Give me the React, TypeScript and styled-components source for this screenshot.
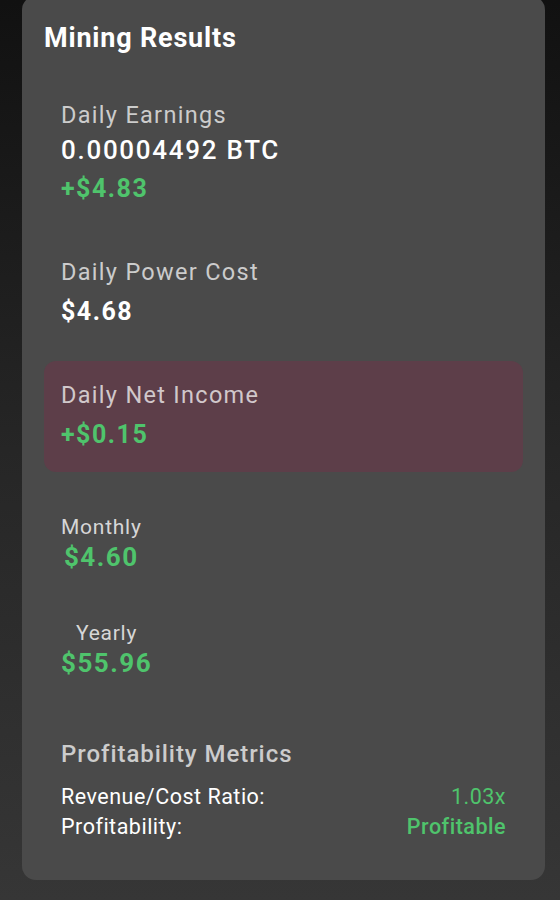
import React from 'react';
import styled, { createGlobalStyle } from 'styled-components';

const GlobalStyle = createGlobalStyle`
  html, body {
    margin: 0;
    padding: 0;
  }
  body {
    min-height: 900px;
    background: linear-gradient(180deg, #111111 0%, #262626 50%, #363636 100%);
    font-family: Roboto, "Noto Sans", "Liberation Sans", sans-serif;
    color: #ffffff;
    overflow: hidden;
  }
`;

const green = '#4fc46c';

const Page = styled.div`
  width: 560px;
  height: 900px;
  overflow: hidden;
`;

const Card = styled.section`
  display: flex;
  flex-direction: column;
  margin: -4px 15px 0 22px;
  padding: 25px 22px 20px;
  background: #4a4a4a;
  border-radius: 14px;
`;

const Title = styled.h2`
  margin: 0;
  font-size: 27px;
  line-height: 34px;
  font-weight: 700;
  letter-spacing: 0.8px;
  color: #ffffff;
`;

const ResultList = styled.div`
  display: flex;
  flex-direction: column;
  gap: 12px;
  margin-top: 26px;
`;

const ResultItem = styled.div<{ $highlight?: boolean }>`
  display: flex;
  flex-direction: column;
  padding: 18px 17px 19px;
  border-radius: 12px;
  background: ${({ $highlight }) => ($highlight ? '#5d3e49' : 'transparent')};
`;

const Label = styled.div`
  font-size: 23.5px;
  line-height: 33px;
  letter-spacing: 1.3px;
  white-space: nowrap;
  color: rgba(255, 255, 255, 0.72);
`;

const Value = styled.div<{ $positive?: boolean; $bold?: boolean; $gap?: number }>`
  margin-top: ${({ $gap }) => $gap ?? 0}px;
  font-size: ${({ $bold }) => ($bold ? 25 : 26)}px;
  line-height: 36px;
  font-weight: ${({ $bold }) => ($bold ? 700 : 500)};
  letter-spacing: ${({ $bold }) => ($bold ? 1.5 : 1.7)}px;
  white-space: nowrap;
  color: ${({ $positive }) => ($positive ? green : '#ffffff')};
`;

const StatGrid = styled.div`
  display: grid;
  justify-items: start;
  gap: 14px;
  margin-top: 24px;
`;

const StatItem = styled.div`
  display: flex;
  flex-direction: column;
  align-items: center;
  padding: 16px 17px;
`;

const StatLabel = styled.div`
  font-size: 21px;
  line-height: 30px;
  letter-spacing: 0.75px;
  color: rgba(255, 255, 255, 0.78);
`;

const StatValue = styled.div`
  margin-top: 1px;
  font-size: 26px;
  line-height: 29px;
  font-weight: 700;
  letter-spacing: 1.5px;
  color: ${green};
`;

const Metrics = styled.div`
  display: flex;
  flex-direction: column;
  margin-top: 24px;
  padding: 18px 17px;
`;

const MetricsTitle = styled.h3`
  margin: 0 0 10px;
  font-size: 24px;
  line-height: 36px;
  font-weight: 500;
  letter-spacing: 0.95px;
  color: rgba(255, 255, 255, 0.72);
`;

const MetricRow = styled.div`
  display: flex;
  justify-content: space-between;
  align-items: center;
  font-size: 21.5px;
  line-height: 30px;
  letter-spacing: 0.5px;
`;

const MetricName = styled.span`
  color: #ffffff;
`;

const MetricValue = styled.span<{ $strong?: boolean }>`
  color: ${green};
  font-weight: ${({ $strong }) => ($strong ? 500 : 400)};
`;

export default function App() {
  return (
    <Page>
      <GlobalStyle />
      <Card>
        <Title>Mining Results</Title>

        <ResultList>
          <ResultItem>
            <Label>Daily Earnings</Label>
            <Value>0.00004492 BTC</Value>
            <Value $positive $bold $gap={3}>+$4.83</Value>
          </ResultItem>
          <ResultItem>
            <Label>Daily Power Cost</Label>
            <Value $bold $gap={5}>$4.68</Value>
          </ResultItem>
          <ResultItem $highlight>
            <Label>Daily Net Income</Label>
            <Value $positive $bold $gap={5}>+$0.15</Value>
          </ResultItem>
        </ResultList>

        <StatGrid>
          <StatItem>
            <StatLabel>Monthly</StatLabel>
            <StatValue>$4.60</StatValue>
          </StatItem>
          <StatItem>
            <StatLabel>Yearly</StatLabel>
            <StatValue>$55.96</StatValue>
          </StatItem>
        </StatGrid>

        <Metrics>
          <MetricsTitle>Profitability Metrics</MetricsTitle>
          <MetricRow>
            <MetricName>Revenue/Cost Ratio:</MetricName>
            <MetricValue>1.03x</MetricValue>
          </MetricRow>
          <MetricRow>
            <MetricName>Profitability:</MetricName>
            <MetricValue $strong>Profitable</MetricValue>
          </MetricRow>
        </Metrics>
      </Card>
    </Page>
  );
}
